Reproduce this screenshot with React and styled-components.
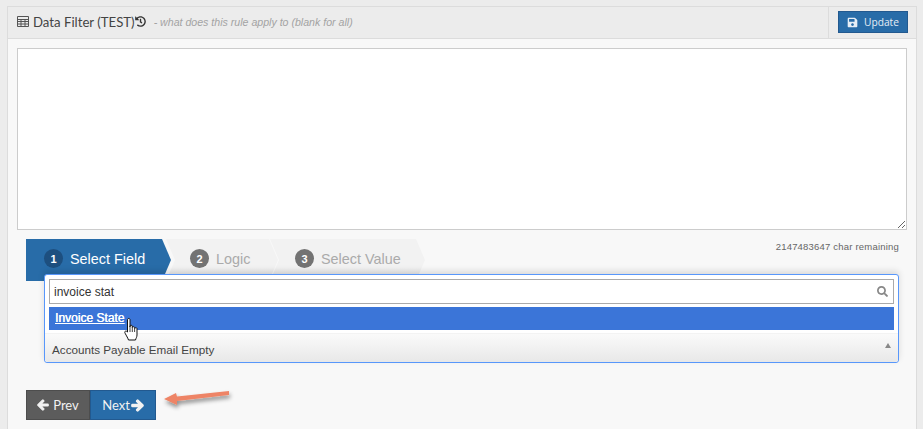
import React from "react";
import styled, { createGlobalStyle } from "styled-components";
import { FaArrowLeft, FaArrowRight, FaHistory, FaSave, FaSearch } from "react-icons/fa";

const Global = createGlobalStyle`
  html, body { margin: 0; padding: 0; background: #ececec; }
  body { width: 923px; height: 429px; overflow: hidden; font-family: "Liberation Sans", Arial, sans-serif; }
`;

const Page = styled.div`
  padding: 6px 6px 0 7px;
  height: 429px;
  box-sizing: border-box;
`;
const Panel = styled.section`
  height: 423px;
  box-sizing: border-box;
  background: #f8f8f8;
  border: 1px solid #dcdcdc;
  border-bottom: 0;
`;
const Header = styled.header`
  height: 32px;
  box-sizing: border-box;
  display: flex;
  align-items: stretch;
  justify-content: space-between;
  background: #ececec;
  border-bottom: 1px solid #dcdcdc;
`;
const TitleWrap = styled.div`
  display: flex;
  align-items: center;
  padding-left: 9px;
  height: 29px;
`;
const Title = styled.span`
  font-family: Lato, sans-serif;
  font-size: 13.2px;
  color: #444;
  display: flex;
  align-items: center;
  gap: 4px;
  svg { flex: none; }
`;
const Hint = styled.em`
  font-size: 10.6px;
  color: #a3a3a3;
  margin-left: 8px;
`;
const Actions = styled.div`
  width: 88px;
  border-left: 1px solid #dcdcdc;
  display: flex;
  align-items: center;
  justify-content: center;
  box-sizing: border-box;
`;
const UpdateButton = styled.button`
  width: 70px;
  height: 22px;
  padding: 0 0 0 1px;
  border: 1px solid #22598f;
  background: #286ca8;
  color: #e6eef6;
  font-family: "Open Sans", sans-serif;
  font-size: 10.2px;
  display: flex;
  align-items: center;
  justify-content: center;
  gap: 6px;
  margin-top: -1px;
`;
const Body = styled.div`
  padding: 9px 9px 0 9px;
`;
const Area = styled.textarea`
  display: block;
  width: 890px;
  height: 182px;
  box-sizing: border-box;
  border: 1px solid #ccc;
  background: #fff;
  margin: 0;
`;
const Wizard = styled.div`
  position: relative;
  margin: 9px 0 0 9px;
`;
const Remaining = styled.div`
  position: absolute;
  top: 2px;
  right: 8px;
  font-size: 9.5px;
  letter-spacing: 0.2px;
  color: #666;
`;
const Steps = styled.div`
  display: flex;
  height: 42px;
`;
const Step = styled.div`
  height: 42px;
  box-sizing: border-box;
  display: flex;
  align-items: flex-start;
  gap: 7px;
  padding: 10px 0 0 ${p => p.$pad}px;
  width: ${p => p.$w}px;
  margin-left: ${p => p.$ml}px;
  font-size: 14.4px;
  line-height: 20px;
  color: ${p => (p.$active ? "#fff" : "#aaa")};
  background: ${p => (p.$active ? "#286ca8" : "linear-gradient(#f2f2f2 70%, #dedede 100%)")};
  clip-path: ${p =>
    p.$active
      ? "polygon(0 0, calc(100% - 9px) 0, 100% 50%, calc(100% - 9px) 100%, 0 100%)"
      : "polygon(0 0, calc(100% - 9px) 0, 100% 50%, calc(100% - 9px) 100%, 0 100%, 9px 50%)"};
`;
const Badge = styled.span`
  width: 19px;
  height: 19px;
  border-radius: 50%;
  flex: none;
  display: flex;
  align-items: center;
  justify-content: center;
  font-size: 11px;
  font-weight: bold;
  color: #fff;
  background: ${p => (p.$active ? "#1d4f7f" : "#737373")};
`;
const Dropdown = styled.div`
  position: relative;
  margin: -7px 0 0 18px;
  width: 855px;
  height: 89px;
  box-sizing: border-box;
  background: #fff;
  border: 1px solid #5897fb;
  border-radius: 3px;
  padding: 4px;
  box-shadow: 0 -3px 6px rgba(0, 0, 0, 0.12);
`;
const SearchBox = styled.div`
  height: 25px;
  box-sizing: border-box;
  border: 1px solid #aaa;
  display: flex;
  align-items: center;
  justify-content: space-between;
  padding: 0 5px 0 4px;
  font-size: 12px;
  color: #333;
  svg { color: #888; }
`;
const Result = styled.div`
  height: 23px;
  margin-top: 3px;
  background: #3b75d8;
  color: #fff;
  font-size: 12px;
  line-height: 22px;
  padding-left: 6px;
  text-shadow: 0.3px 0 0 #fff;
  span { text-decoration: underline; }
`;
const Selected = styled.div`
  position: absolute;
  left: 0;
  right: 0;
  bottom: 0;
  height: 29px;
  border-radius: 0 0 3px 3px;
  border-top: 1px solid #f3f3f3;
  background: linear-gradient(#fafafa, #e8e8e8);
  box-sizing: border-box;
  display: flex;
  align-items: center;
  justify-content: space-between;
  padding: 2px 7px 0 7px;
  font-size: 11.7px;
  color: #444;
`;
const Caret = styled.i`
  width: 0;
  height: 0;
  border: 3px solid transparent;
  border-top: 0;
  border-bottom: 5px solid #888;
  margin-top: -8px;
`;
const Cursor = styled.svg`
  position: absolute;
  left: 79px;
  top: 43px;
  z-index: 3;
  overflow: visible;
`;
const Nav = styled.div`
  display: flex;
  margin: 27px 0 0 0;
  position: relative;
  width: 130px;
`;
const NavButton = styled.button`
  height: 30px;
  width: ${p => p.$w}px;
  padding: 0;
  box-sizing: border-box;
  border: 1px solid ${p => (p.$next ? "#22598f" : "#4d4d4d")};
  background: ${p => (p.$next ? "#286ca8" : "#5c5c5c")};
  color: #f2f2f2;
  font-family: Lato, sans-serif;
  font-size: 13px;
  display: flex;
  align-items: center;
  justify-content: center;
  gap: ${p => (p.$next ? 1 : 4)}px;
  svg { stroke: currentColor; stroke-width: 50px; }
`;
const Arrow = styled.svg`
  position: absolute;
  left: 136px;
  top: -6px;
  overflow: visible;
`;

export default function App() {
  return (
    <Page>
      <Global />
      <Panel>
        <Header>
          <TitleWrap>
            <Title>
              <svg width="12" height="11" viewBox="0 0 12 11" fill="none" stroke="#555" strokeWidth="1">
                <path d="M.5.5h11v10H.5zM.5 3.5h11M.5 5.5h11M.5 8h11M4 3.5V10.5M8 3.5V10.5" />
              </svg>
              <span>Data Filter (TEST)</span>
              <FaHistory size={11} color="#333" style={{ marginLeft: -4 }} />
            </Title>
            <Hint>- what does this rule apply to (blank for all)</Hint>
          </TitleWrap>
          <Actions>
            <UpdateButton>
              <FaSave size={11} />
              Update
            </UpdateButton>
          </Actions>
        </Header>
        <Body>
          <Area />
          <Wizard>
            <Remaining>2147483647 char remaining</Remaining>
            <Steps>
              <Step $active $w={145} $ml={0} $pad={18}>
                <Badge $active>1</Badge>Select Field
              </Step>
              <Step $w={112} $ml={-5} $pad={24}>
                <Badge>2</Badge>Logic
              </Step>
              <Step $w={155} $ml={-8} $pad={25}>
                <Badge>3</Badge>Select Value
              </Step>
            </Steps>
            <Dropdown>
              <SearchBox>
                invoice stat
                <FaSearch size={11} />
              </SearchBox>
              <Result>
                <span>Invoice State</span>
              </Result>
              <Selected>
                Accounts Payable Email Empty
                <Caret />
              </Selected>
              <Cursor width="16" height="23" viewBox="0 0 16 23">
                <path
                  d="M3.5 1.5 C3.5 .2 6 .2 6 1.5 V9 V8 C6 7 8.3 7 8.3 8 V9.5 C8.3 8.5 10.6 8.5 10.6 9.5 V10.5 C10.6 9.5 13 9.5 13 10.5 V17 C13 19 12 20 11.5 22 H4.5 C4 20 1 15.5 .8 14.5 C.5 13 2.3 12.5 3.5 14 Z"
                  fill="#fff"
                  stroke="#111"
                  strokeWidth="1"
                  strokeLinejoin="round"
                />
                <path d="M6 9V14M8.3 9.5V14M10.6 10.5V14" stroke="#111" strokeWidth=".8" />
              </Cursor>
            </Dropdown>
            <Nav>
              <NavButton $w={64}>
                <FaArrowLeft size={12} />
                Prev
              </NavButton>
              <NavButton $next $w={66}>
                Next
                <FaArrowRight size={13} />
              </NavButton>
              <Arrow width="70" height="30" viewBox="0 0 70 30">
                <defs>
                  <filter id="s" x="-20%" y="-50%" width="140%" height="250%">
                    <feDropShadow dx="1" dy="3" stdDeviation="2" floodColor="#000" floodOpacity="0.45" />
                  </filter>
                </defs>
                <path d="M2 15 L14 9 L15 12.5 L67 7 L67 11 L15 17 L15 21 Z" fill="#ee8466" filter="url(#s)" />
              </Arrow>
            </Nav>
          </Wizard>
        </Body>
      </Panel>
    </Page>
  );
}
